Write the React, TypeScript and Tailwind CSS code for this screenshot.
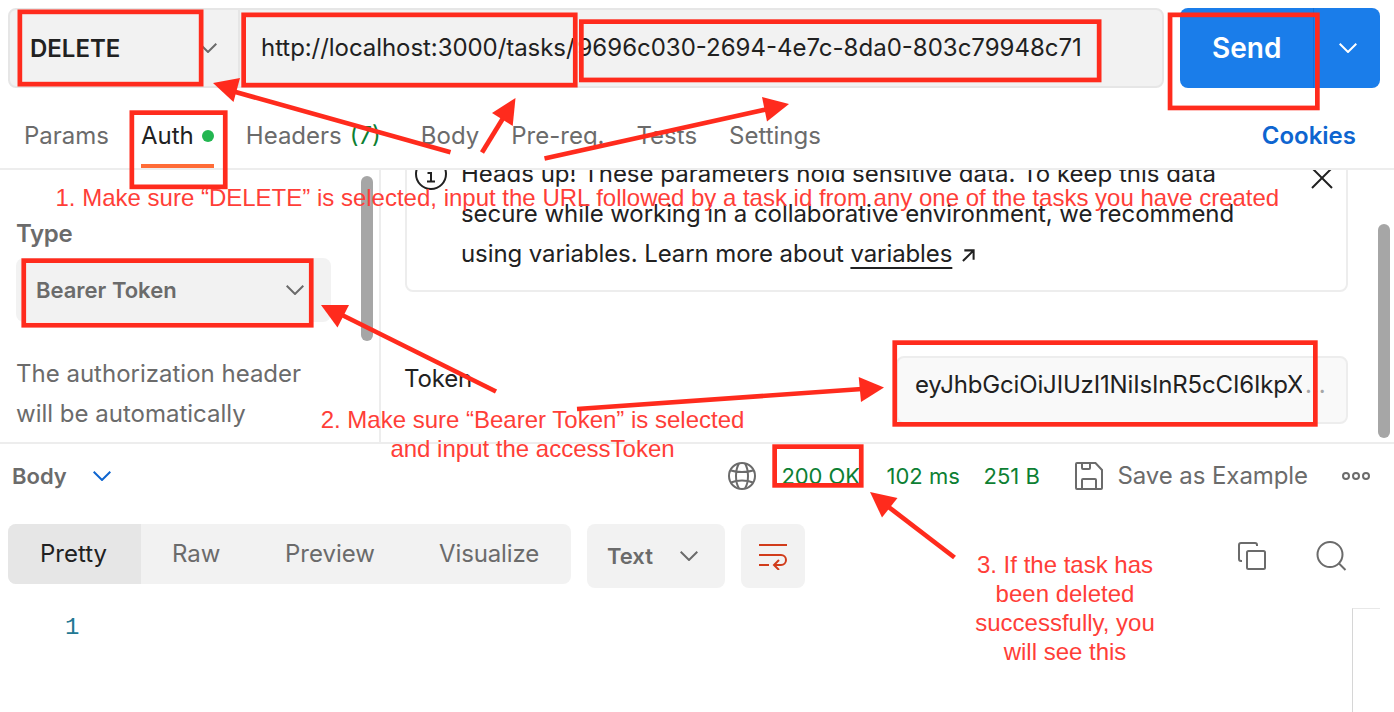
import { clsx } from "clsx";

function Chevron({ className }: { className?: string }) {
  return (
    <svg width="18" height="10" viewBox="0 0 18 10" fill="none" stroke="currentColor" strokeWidth="2" className={clsx("shrink-0", className)}>
      <path d="M0.7 0.7 9 9l8.3-8.3" />
    </svg>
  );
}

function RequestBar() {
  return (
    <div className="flex h-[88px] shrink-0 pt-2 pl-2">
      <div className="flex h-20 w-[1156px] overflow-hidden rounded-lg border-2 border-[#e6e6e6] bg-[#f2f2f2]">
        <div className="flex w-[230px] items-center border-r-2 border-[#e6e6e6] pl-5 text-[#212121]">
          <span className="w-[169px] pt-0.5 font-semibold leading-8">DELETE</span>
          <Chevron className="text-[#6b6b6b]" />
        </div>
        <div className="flex items-center pl-[21px] leading-8 text-[#212121]">
          <span className="tracking-[-0.06px]">http://localhost:3000/tasks/</span>
          <span className="ml-[3px]">9696c030-2694-4e7c-8da0-803c79948c71</span>
        </div>
      </div>
      <div className="ml-4 flex h-20 w-[200px] overflow-hidden rounded-lg bg-[#1a7dea] text-white">
        <div className="flex w-[134px] items-center border-r border-[#1570d6] pl-8 text-[28px] font-semibold leading-8">Send</div>
        <div className="flex flex-1 items-center pl-[25px]">
          <Chevron />
        </div>
      </div>
    </div>
  );
}

function Tabs() {
  return (
    <div className="flex h-[82px] shrink-0 gap-8 border-b-2 border-[#ededed] pr-[38px] pl-6 leading-8 text-[#6b6b6b]">
      <div className="pt-8">Params</div>
      <div className="flex flex-col justify-between pt-8 text-[#212121]">
        <div className="flex items-center gap-2">
          Auth
          <span className="size-3 rounded-full bg-[#23b651]" />
        </div>
        <div className="h-1 bg-[#ff6c37]" />
      </div>
      <div className="mr-2 flex gap-2 pt-8">
        Headers <span className="text-[#0d7f33]">(7)</span>
      </div>
      <div className="pt-8">Body</div>
      <div className="pt-8">Pre-req.</div>
      <div className="pt-8">Tests</div>
      <div className="pt-8">Settings</div>
      <div className="ml-auto pt-8 font-semibold text-[#0e65d0]">Cookies</div>
    </div>
  );
}

function AuthTypePanel() {
  return (
    <div className="flex w-[381px] shrink-0 border-r-2 border-[#ededed] text-[#6b6b6b]">
      <div className="w-[345px] pl-4">
        <div className="mt-12 leading-8 font-semibold tracking-[-0.3px]">Type</div>
        <div className="mt-2 flex h-16 w-[315px] items-center justify-between rounded-lg bg-[#f2f2f2] pr-[27px] pl-5">
          <span className="text-[22px] leading-8 font-semibold">Bearer Token</span>
          <Chevron />
        </div>
        <div className="mt-8 leading-10">
          The authorization header
          <br />
          will be automatically
        </div>
      </div>
      <div className="mt-1.5 ml-4 h-[165px] w-3 rounded-full bg-[#a6a6a6]" />
    </div>
  );
}

function Notice() {
  return (
    <div className="-mt-10 flex h-[162px] w-[943px] shrink-0 rounded-lg border-2 border-[#ededed] pl-2 text-[#212121]">
      <svg width="32" height="32" viewBox="0 0 32 32" fill="none" stroke="currentColor" strokeWidth="2" className="mt-[26px] shrink-0">
        <circle cx="16" cy="16" r="15" />
        <path d="M12.5 15H16v8.5M12 23.5h8" />
        <circle cx="15.5" cy="9.5" r="1" fill="currentColor" stroke="none" />
      </svg>
      <div className="mt-[22px] ml-[14px] flex-1 leading-10 whitespace-nowrap">
        <div>Heads up! These parameters hold sensitive data. To keep this data</div>
        <div className="tracking-[-0.07px]">secure while working in a collaborative environment, we recommend</div>
        <div className="tracking-[-0.09px]">
          using variables. Learn more about{" "}
          <span className="underline decoration-2 underline-offset-[5px] [text-decoration-skip-ink:none]">variables</span>
          <svg width="13" height="13" viewBox="0 0 14 14" fill="none" stroke="currentColor" strokeWidth="2.200" className="ml-2.5 inline-block align-baseline">
            <path d="M1 13 12.5 1.5M2.5 1.5h10v10" />
          </svg>
        </div>
      </div>
      <svg width="22" height="22" viewBox="0 0 22 22" fill="none" stroke="currentColor" strokeWidth="2" className="mt-[35px] mr-[13px] shrink-0">
        <path d="M1 1l20 20M21 1 1 21" />
      </svg>
    </div>
  );
}

function TokenPanel() {
  return (
    <div className="flex min-w-0 flex-1 pl-6">
      <div className="flex w-[943px] flex-col">
        <Notice />
        <div className="mt-16 flex shrink-0 text-[#212121]">
          <div className="mt-[7px] w-[491px] leading-8 tracking-[-0.16px] -indent-px">Token</div>
          <div className="flex h-[68px] w-[452px] items-center rounded-lg border-2 border-[#ededed] bg-[#f9f9f9] pb-2.5 pl-[17px]">
            <div className="w-[387px] overflow-hidden leading-8 tracking-[-0.16px] whitespace-nowrap">eyJhbGciOiJIUzI1NiIsInR5cCI6IkpXVCJ9</div>
            <div className="ml-[3px] leading-8 text-[#a6a6a6]">...</div>
          </div>
        </div>
      </div>
      <div className="mt-[54px] ml-[30px] h-[214px] w-3 rounded-full bg-[#a6a6a6]" />
    </div>
  );
}

function ResponseHeader() {
  return (
    <div className="flex h-16 shrink-0 items-center pr-6 pl-3 text-[22px] leading-8 text-[#6b6b6b]">
      <span className="font-semibold">Body</span>
      <Chevron className="ml-[26px] text-[#0e65d0]" />
      <svg width="28" height="28" viewBox="0 0 28 28" fill="none" stroke="currentColor" strokeWidth="2" className="ml-auto">
        <circle cx="14" cy="14" r="13" />
        <path d="M11 1.5C7 8 7 20 11 26.500M17 1.500c4 6.500 4 18.500 0 25M3 8.500c6 2 16 2 22 0M3 20.500c6-2.600 16-2.600 22 0" />
      </svg>
      <div className="ml-[25px] flex text-[#0d7f33]">
        <span className="w-[105px] tracking-[-0.1px]">200 OK</span>
        <span className="w-[97px]">102 ms</span>
        <span className="w-[92px]">251 B</span>
      </div>
      <svg width="28" height="28" viewBox="0 0 28 28" fill="none" stroke="currentColor" strokeWidth="2">
        <path d="M2 1h18.500L27 8v18a1 1 0 0 1-1 1H2a1 1 0 0 1-1-1V2a1 1 0 0 1 1-1Z" />
        <path d="M7 1v5a1 1 0 0 0 1 1h6a1 1 0 0 0 1-1V1M7 27v-9a1 1 0 0 1 1-1h12a1 1 0 0 1 1 1v9" />
      </svg>
      <span className="ml-[14px] text-2xl leading-8 tracking-[-0.08px]">Save as Example</span>
      <svg width="28" height="10" viewBox="0 0 28 10" fill="none" stroke="currentColor" strokeWidth="2" className="ml-[34px]">
        <circle cx="4" cy="5" r="3" />
        <circle cx="14" cy="5" r="3" />
        <circle cx="24" cy="5" r="3" />
      </svg>
    </div>
  );
}

function ResponseToolbar() {
  return (
    <div className="mt-4 flex h-16 shrink-0 items-start gap-4 pl-2 leading-[60px] text-[#6b6b6b]">
      <div className="flex h-[60px] w-[563px] overflow-hidden rounded-lg bg-[#f2f2f2]">
        <div className="w-[133px] bg-[#e6e6e6] pl-8 text-[#212121]">Pretty</div>
        <div className="w-[112px] pl-[31px]">Raw</div>
        <div className="w-[154px] pl-8">Preview</div>
        <div className="pl-8 tracking-[-0.12px]">Visualize</div>
      </div>
      <div className="flex h-16 w-[138px] items-center rounded-lg bg-[#f2f2f2] pl-5">
        <span className="w-[73px] text-[22px] leading-8 font-semibold">Text</span>
        <Chevron />
      </div>
      <div className="flex h-16 w-16 items-center justify-center rounded-lg bg-[#f2f2f2] text-[#d13c1b]">
        <svg width="28" height="28" viewBox="0 0 28 28" fill="none" stroke="currentColor" strokeWidth="2">
          <path d="M0 3h28M0 13h22a5 5 0 0 1 0 10h-6.500M20 18l-5 5 5 5M0 23h10" />
        </svg>
      </div>
      <svg width="28" height="28" viewBox="0 0 28 28" fill="none" stroke="currentColor" strokeWidth="2" className="mt-[18px] ml-[417px]">
        <rect x="9" y="9" width="18" height="18" rx="1.500" />
        <path d="M4 19H3a2 2 0 0 1-2-2V3a2 2 0 0 1 2-2h14a2 2 0 0 1 2 2v1" />
      </svg>
      <svg width="31" height="30" viewBox="0 0 31 30" fill="none" stroke="currentColor" strokeWidth="2" className="mt-[17px] ml-[34px]">
        <circle cx="14" cy="13.500" r="12.500" />
        <path d="m22.500 22 7 7" />
      </svg>
    </div>
  );
}

function ResponseBody() {
  return (
    <div className="flex min-h-0 flex-1 justify-between pt-5 pr-3.5">
      <div className="pt-1 pl-[65px] font-['Liberation_Mono',monospace] leading-8 text-[#237893]">1</div>
      <div className="w-7 border-t border-l border-t-[#e8e8e8] border-l-[#d6d6d6]" />
    </div>
  );
}

const boxes = [
  [17.5, 9.5, 203.5, 86.5],
  [241.3, 12.5, 577.6, 87.5],
  [579, 19.3, 1101.5, 82.3],
  [1167.7, 12.5, 1319.7, 110.3],
  [129.5, 110.3, 227.6, 189.2],
  [21.4, 258.3, 313.6, 327.6],
  [892.4, 340.3, 1317.7, 426.7],
  [772.3, 444.3, 863.6, 487.7],
];

const arrows = [
  { line: "M450.500 152.300 232 91", head: "213,83 240,78 233.5,102" },
  { line: "M482 152.500 505 115", head: "515.5,98 492,113 512.7,126" },
  { line: "M544.500 158.500 768 109", head: "789,104 762,97 767,121.5" },
  { line: "M496 391.500 340 314", head: "321,305 349,305 337.5,327.5" },
  { line: "M577 409 862 389", head: "884,387.5 858.7,377 861,402" },
  { line: "M954.500 557.500 886 505", head: "870,492 897.5,498 882,517.5" },
];

function Annotations() {
  return (
    <div className="pointer-events-none absolute inset-0 font-['Liberation_Sans',Arial,sans-serif] leading-[29px] whitespace-nowrap text-[#ff3e38]">
      <svg width="1394" height="712" viewBox="0 0 1394 712" className="absolute inset-0" fill="none" stroke="#ff2b1d" strokeWidth="4.700">
        {boxes.map(([x1, y1, x2, y2]) => (
          <rect key={x1} x={x1 + 2.35} y={y1 + 2.35} width={x2 - x1 - 4.7} height={y2 - y1 - 4.7} />
        ))}
        {arrows.map(({ line, head }) => (
          <g key={head}>
            <path d={line} />
            <polygon points={head} fill="#ff2b1d" stroke="none" />
          </g>
        ))}
      </svg>
      <p className="absolute top-[183px] left-[55.500px]">
        1. Make sure “DELETE” is selected, input the URL followed by a task id from any one of the tasks you have created
      </p>
      <p className="absolute top-[405px] left-[320px] w-[425px] text-center">
        2. Make sure “Bearer Token” is selected
        <br />
        and input the accessToken
      </p>
      <p className="absolute top-[550px] left-[965px] w-[200px] text-center">
        3. If the task has
        <br />
        been deleted
        <br />
        successfully, you
        <br />
        will see this
      </p>
    </div>
  );
}

export default function App() {
  return (
    <div className="relative flex h-[712px] w-[1394px] flex-col overflow-hidden bg-white font-['Inter',sans-serif] text-2xl">
      <RequestBar />
      <Tabs />
      <div className="flex h-[274px] shrink-0 overflow-hidden border-b-2 border-[#ededed]">
        <AuthTypePanel />
        <TokenPanel />
      </div>
      <ResponseHeader />
      <ResponseToolbar />
      <ResponseBody />
      <Annotations />
    </div>
  );
}
